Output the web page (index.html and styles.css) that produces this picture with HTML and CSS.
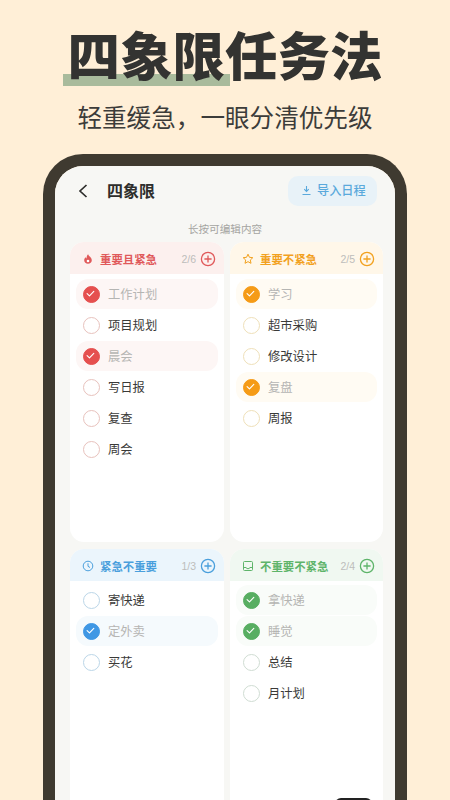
FILE: index.html
```html
<!DOCTYPE html>
<html lang="zh-CN">
<head>
    <meta charset="UTF-8">
    <meta name="viewport" content="width=device-width, initial-scale=1.0">
    <title>四象限任务法</title>
    <link rel="stylesheet" href="styles.css">
</head>
<body>
    <svg width="0" height="0" class="defs">
        <symbol id="plus" viewBox="0 0 16 16"><circle cx="8" cy="8" r="6.6" fill="none" stroke="currentColor" stroke-width="1.3"/><path d="M8 4.4v7.2M4.4 8h7.2" stroke="currentColor" stroke-width="1.3" fill="none"/></symbol>
        <symbol id="tick" viewBox="0 0 18 18"><path d="M5.4 9.2l2.5 2.4 4.6-4.8" stroke="#fff" stroke-width="1.2" fill="none" stroke-linecap="round" stroke-linejoin="round"/></symbol>
    </svg>

    <header class="hero">
        <h1 class="hero-title"><span class="mark">四象限</span>任务法</h1>
        <p class="hero-sub">轻重缓急，一眼分清优先级</p>
    </header>

    <div class="phone">
        <div class="screen">
            <div class="topbar">
                <svg class="back" width="10" height="16" viewBox="0 0 10 16"><path d="M8.500 2L2 8l6.500 6" fill="none" stroke="#2e2e2c" stroke-width="1.7"/></svg>
                <span class="page-title">四象限</span>
                <button class="import">
                    <svg width="11" height="11" viewBox="0 0 11 11"><path d="M5.5 1v5M3.2 4.2l2.3 2.2 2.3-2.2M1.500 9.500h8" fill="none" stroke="#5aa9dc" stroke-width="1.1"/></svg>
                    <span>导入日程</span>
                </button>
            </div>
            <p class="hint">长按可编辑内容</p>

            <div class="grid">
                <section class="card red">
                    <div class="card-head">
                        <svg class="kind" width="12" height="12" viewBox="-0.5 -0.5 12 12"><path d="M5.600.8c.3 1.700 3.700 3.200 3.700 6 0 2-1.700 3.400-3.800 3.400S1.700 8.800 1.700 6.800c0-1.300.7-2.300 1.400-3 .2.700.5 1.100 1 1.300C4 3.400 4.500 1.800 5.600.8z" fill="currentColor"/><circle cx="5.500" cy="7.500" r="1.300" fill="#fff"/></svg>
                        <span class="card-name">重要且紧急</span>
                        <span class="count">2/6</span>
                        <svg class="add" width="16" height="16"><use href="#plus"/></svg>
                    </div>
                    <ul class="tasks">
                        <li class="task done"><span class="box"><svg width="17" height="17"><use href="#tick"/></svg></span>工作计划</li>
                        <li class="task"><span class="box"></span>项目规划</li>
                        <li class="task done"><span class="box"><svg width="17" height="17"><use href="#tick"/></svg></span>晨会</li>
                        <li class="task"><span class="box"></span>写日报</li>
                        <li class="task"><span class="box"></span>复查</li>
                        <li class="task"><span class="box"></span>周会</li>
                    </ul>
                </section>

                <section class="card orange">
                    <div class="card-head">
                        <svg class="kind" width="12" height="12" viewBox="0 0 12 12"><path d="M6 1.200l1.450 3.100 3.350.4-2.500 2.300.7 3.300L6 8.650 3 10.300l.7-3.300-2.500-2.300 3.350-.4z" fill="none" stroke="currentColor" stroke-width="1"/></svg>
                        <span class="card-name">重要不紧急</span>
                        <span class="count">2/5</span>
                        <svg class="add" width="16" height="16"><use href="#plus"/></svg>
                    </div>
                    <ul class="tasks">
                        <li class="task done"><span class="box"><svg width="17" height="17"><use href="#tick"/></svg></span>学习</li>
                        <li class="task"><span class="box"></span>超市采购</li>
                        <li class="task"><span class="box"></span>修改设计</li>
                        <li class="task done"><span class="box"><svg width="17" height="17"><use href="#tick"/></svg></span>复盘</li>
                        <li class="task"><span class="box"></span>周报</li>
                    </ul>
                </section>

                <section class="card blue">
                    <div class="card-head">
                        <svg class="kind" width="12" height="12" viewBox="0 0 12 12"><circle cx="6" cy="6" r="4.800" fill="none" stroke="currentColor" stroke-width="1"/><path d="M6 3.300V6.300l2 1.200" fill="none" stroke="currentColor" stroke-width="1"/></svg>
                        <span class="card-name">紧急不重要</span>
                        <span class="count">1/3</span>
                        <svg class="add" width="16" height="16"><use href="#plus"/></svg>
                    </div>
                    <ul class="tasks">
                        <li class="task"><span class="box"></span>寄快递</li>
                        <li class="task done"><span class="box"><svg width="17" height="17"><use href="#tick"/></svg></span>定外卖</li>
                        <li class="task"><span class="box"></span>买花</li>
                    </ul>
                </section>

                <section class="card green">
                    <div class="card-head">
                        <svg class="kind" width="12" height="12" viewBox="0 0 12 12"><rect x="1.500" y="1.500" width="9" height="9" rx="1" fill="none" stroke="currentColor" stroke-width="1"/><path d="M1.500 7.500h2.700l.6 1.100h2.400l.6-1.100h2.700" fill="none" stroke="currentColor" stroke-width="1"/></svg>
                        <span class="card-name">不重要不紧急</span>
                        <span class="count">2/4</span>
                        <svg class="add" width="16" height="16"><use href="#plus"/></svg>
                    </div>
                    <ul class="tasks">
                        <li class="task done"><span class="box"><svg width="17" height="17"><use href="#tick"/></svg></span>拿快递</li>
                        <li class="task done"><span class="box"><svg width="17" height="17"><use href="#tick"/></svg></span>睡觉</li>
                        <li class="task"><span class="box"></span>总结</li>
                        <li class="task"><span class="box"></span>月计划</li>
                    </ul>
                </section>
            </div>
            <div class="home-bar"></div>
        </div>
    </div>
</body>
</html>
```

FILE: styles.css
```css
html, body {
    height: 800px;
    overflow: hidden;
}

body {
    margin: 0;
    background-color: #ffefd7;
    color: #333331;
    font-family: "Noto Sans CJK SC", "Noto Sans", sans-serif;
}

.defs {
    position: absolute;
}

.hero {
    height: 154px;
    padding-top: 18px;
    box-sizing: border-box;
    text-align: center;
}

.hero-title {
    margin: 0;
    font-size: 52.5px;
    line-height: 70px;
    font-weight: 900;
    color: #333331;
}

.mark {
    position: relative;
    z-index: 0;
}

.mark::after {
    content: "";
    position: absolute;
    z-index: -1;
    left: -4px;
    right: -5px;
    top: 59px;
    height: 12px;
    background: #a9bb9c;
}

.hero-sub {
    margin: 11px 0 0;
    font-size: 24.6px;
    line-height: 34px;
    color: #3c3c3a;
}

.phone {
    width: 340px;
    height: 646px;
    margin-left: 43px;
    border: 12px solid #3f3a30;
    border-bottom: 0;
    border-radius: 40px 40px 0 0;
    overflow: hidden;
}

.screen {
    position: relative;
    height: 100%;
    padding: 10px 15px 0;
    box-sizing: border-box;
    background: #f7f7f4;
}

.topbar {
    display: flex;
    align-items: center;
    height: 30px;
}

.back {
    margin-left: 8px;
}

.page-title {
    margin-left: 19px;
    padding-bottom: 2px;
    font-size: 16px;
    font-weight: 700;
    color: #2e2e2c;
}

.import {
    display: flex;
    align-items: center;
    gap: 5px;
    margin-left: auto;
    margin-right: 3px;
    height: 30px;
    width: 89px;
    padding: 0 0 2px 13px;
    box-sizing: border-box;
    border: none;
    border-radius: 10px;
    background: #e8f2f8;
    color: #5aa9dc;
    font-family: inherit;
    font-size: 12.2px;
    font-weight: 500;
}

.hint {
    margin: 16px 0 0;
    height: 14px;
    line-height: 14px;
    font-size: 10.6px;
    color: #a5a5a2;
    text-align: center;
}

.grid {
    display: grid;
    grid-template-columns: 154px 153px;
    grid-template-rows: 300px 300px;
    gap: 7px 6px;
    margin-top: 6px;
}

.card {
    border-radius: 14px;
    background: #fff;
    overflow: hidden;
}

.card-head {
    display: flex;
    align-items: center;
    height: 32px;
    padding: 2px 8px 0 12px;
    box-sizing: border-box;
    font-size: 11.4px;
}

.kind {
    flex: none;
}

.card-name {
    margin-left: 6px;
    font-weight: 700;
}

.count {
    margin-left: auto;
    margin-right: 4px;
    font-size: 10.5px;
    color: #bdbdbb;
    font-family: "Liberation Sans", sans-serif;
}

.red .card-head { background: #fcf0ee; color: #e0595a; }
.orange .card-head { background: #fff7e9; color: #f2a11e; }
.blue .card-head { background: #ebf5fc; color: #4a9fdc; }
.green .card-head { background: #f0f8f1; color: #5eb46a; }

.tasks {
    list-style: none;
    margin: 5px 0 0;
    padding: 0 6px;
}

.blue .tasks,
.green .tasks {
    margin-top: 4px;
}

.task {
    display: flex;
    align-items: center;
    gap: 8px;
    height: 30px;
    margin-bottom: 1px;
    padding-left: 7px;
    border-radius: 12px;
    font-size: 12.3px;
    color: #3a3a38;
}

.box {
    flex: none;
    width: 17px;
    height: 17px;
    box-sizing: border-box;
    border-radius: 50%;
    border: 1.8px solid #ddd;
}

.box svg {
    display: block;
    margin: -1.8px;
}

.task.done {
    color: #b5b5b3;
}

.red .box { border-color: #e8c2bd; }
.orange .box { border-color: #eedfb8; }
.blue .box { border-color: #bbd6e8; }
.green .box { border-color: #cfdcd2; }

.red .task.done { background: #fdf6f5; }
.orange .task.done { background: #fffbf3; }
.blue .task.done { background: #f5fafd; }
.green .task.done { background: #f9fcf9; }

.red .done .box { background: #e5504f; border-color: #e5504f; }
.orange .done .box { background: #f59b17; border-color: #f59b17; }
.blue .done .box { background: #3f97e4; border-color: #3f97e4; }
.green .done .box { background: #58ae62; border-color: #58ae62; }

.home-bar {
    position: absolute;
    left: 280px;
    top: 632px;
    width: 37px;
    height: 8px;
    border-radius: 6px 6px 0 0;
    background: #222;
}
```
